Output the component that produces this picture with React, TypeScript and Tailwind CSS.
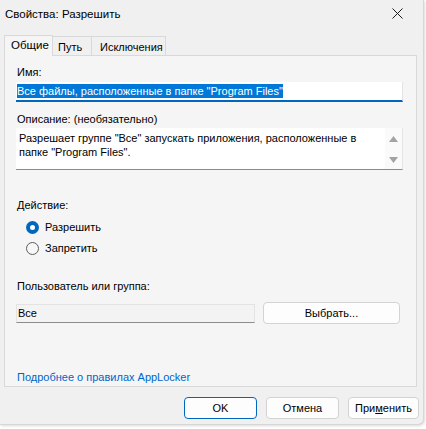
const font = "font-['Segoe_UI','Liberation_Sans',Arial,sans-serif]";

function Radio({ label, checked }: { label: string; checked?: boolean }) {
  return (
    <div className="flex h-[16px] items-center pl-[10px]">
      {checked ? (
        <span className="flex h-[13px] w-[13px] items-center justify-center rounded-full bg-[#0067c0]">
          <span className="h-[5px] w-[5px] rounded-full bg-white" />
        </span>
      ) : (
        <span className="h-[13px] w-[13px] rounded-full border border-[#5d5d5d] bg-[#f7f7f7]" />
      )}
      <span className="ml-[6px]">{label}</span>
    </div>
  );
}

function Button({ children, primary, className }: { children: React.ReactNode; primary?: boolean; className?: string }) {
  return (
    <button
      className={
        "flex h-[22px] items-center justify-center rounded-[4px] border bg-[#fdfdfd] text-[11px] text-black " +
        (primary ? "border-[#0067c0]" : "border-[#d3d3d3]") +
        " " +
        (className ?? "")
      }
    >
      {children}
    </button>
  );
}

export default function App() {
  return (
    <div className={`h-[429px] w-[426px] bg-white text-[11px] leading-[16px] text-black ${font}`}>
      <div className="h-[425px] w-[424px] rounded-br-[6px] border-r border-b border-[#d6d6d6] bg-[#f0f0f0] shadow-[1px_1px_3px_rgba(0,0,0,0.15)]">
        {/* title bar */}
        <div className="flex h-[28px] items-center justify-between pl-[5px] pr-[20px] text-[11.5px]">
          <span>Свойства: Разрешить</span>
          <svg width="11" height="11" viewBox="0 0 11 11" className="mb-[2px]">
            <path d="M0.5 0.5L10.5 10.5M10.5 0.5L0.5 10.5" stroke="#1a1a1a" strokeWidth="1" />
          </svg>
        </div>

        {/* tabs */}
        <div className="mt-[7px] flex h-[20px] items-end pl-[4px]">
          <div className="relative z-10 -mb-px flex h-[21px] w-[49px] items-center border border-b-0 border-[#d9d9d9] bg-[#f5f5f5] pl-[6px] pb-[2px] text-[11.5px]">
            Общие
          </div>
          <div className="flex h-[19px] w-[39px] items-center border border-l-0 border-b-0 border-[#d9d9d9] pl-[5px] pt-[1px]">
            Путь
          </div>
          <div className="flex h-[19px] w-[74px] items-center border border-l-0 border-b-0 border-[#d9d9d9] pl-[8px] pt-[1px]">
            Исключения
          </div>
        </div>

        {/* panel */}
        <div className="ml-[4px] flex h-[332px] w-[413px] flex-col border border-[#d9d9d9] bg-[#f5f5f5] pl-[11px] pr-[13px]">
          <div className="mt-[8px] pl-[1px]">Имя:</div>
          <div className="mt-[2px] flex h-[20px] w-[387px] items-center border-r border-b-2 border-[#e3e3e3] border-b-[#0067c0] bg-white pl-[1px]">
            <span className="bg-[#0078d7] leading-[14px] text-white">Все файлы, расположенные в папке "Program Files"</span>
          </div>

          <div className="mt-[9px] pl-[1px]">Описание: (необязательно)</div>
          <div className="mt-[1px] flex h-[42px] w-[387px] border-r border-b border-[#e3e3e3] border-b-[#8c8c8c] bg-white">
            <div className="flex-1 pl-[3px] pt-[3px] leading-[14px]">
              Разрешает группе "Все" запускать приложения, расположенные в папке "Program Files".
            </div>
            <div className="flex w-[17px] flex-col items-center justify-between bg-[#fafafa] pt-[8px] pb-[6px]">
              <svg width="9" height="6" viewBox="0 0 9 6">
                <path d="M0 6L4.5 0L9 6Z" fill="#a3a3a3" />
              </svg>
              <svg width="9" height="6" viewBox="0 0 9 6">
                <path d="M0 0L9 0L4.5 6Z" fill="#a3a3a3" />
              </svg>
            </div>
          </div>

          <div className="mt-[27px] pl-[1px]">Действие:</div>
          <div className="mt-[6px]">
            <Radio label="Разрешить" checked />
          </div>
          <div className="mt-[5px]">
            <Radio label="Запретить" />
          </div>

          <div className="mt-[22px] pl-[1px]">Пользователь или группа:</div>
          <div className="mt-[8px] flex items-center">
            <div className="flex h-[19px] w-[239px] items-center border border-[#e3e3e3] border-b-[#8c8c8c] bg-[#f3f3f3] pl-[1px]">
              Все
            </div>
            <Button className="ml-[8px] h-[20px] w-[137px]">Выбрать...</Button>
          </div>

          <div className="mt-[45px] pl-[1px] text-[#0066cc]">Подробнее о правилах AppLocker</div>
        </div>

        {/* buttons */}
        <div className="mt-[10px] flex gap-[9px] pl-[184px]">
          <Button primary className="w-[73px]">OK</Button>
          <Button className="w-[73px]">Отмена</Button>
          <Button className="w-[71px]">
            При<span className="underline">м</span>енить
          </Button>
        </div>
      </div>
    </div>
  );
}
